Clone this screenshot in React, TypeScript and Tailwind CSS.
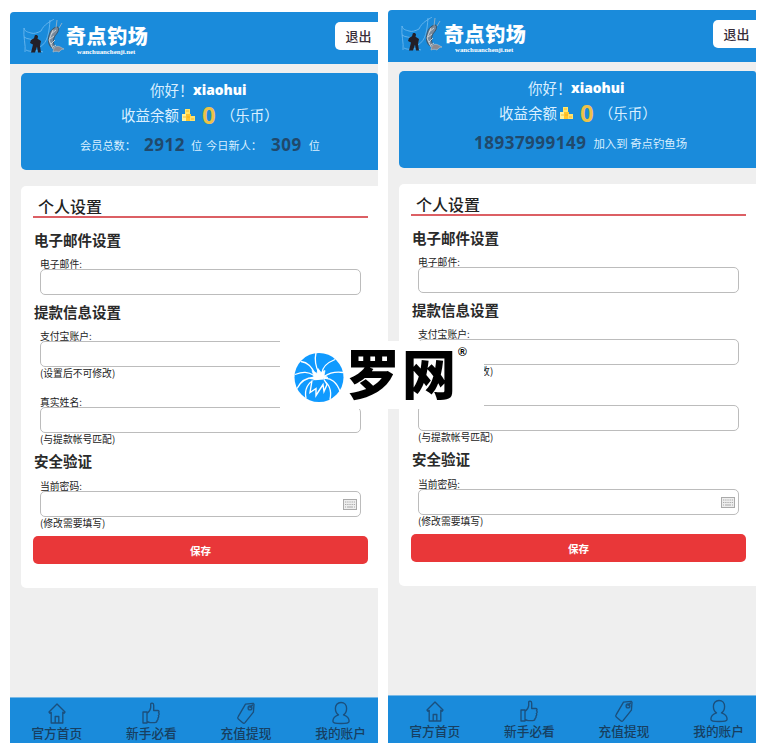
import type { ReactNode } from "react";

type IconName = "home" | "thumb" | "tag" | "user";

function NavIcon({ name }: { name: IconName }) {
  return (
    <svg viewBox="0 0 20 24" className="h-6 w-5" fill="none" stroke="#1b4f7c" strokeWidth="1.35" strokeLinejoin="round" strokeLinecap="round">
      {name === "home" && (
        <path d="M2 11 10 3l8 8-1 1.300-1.200-1V22H4.200V11.300L3 12.300zM8.200 22v-6.500h3.600V22" />
      )}
      {name === "thumb" && (
        <path d="M2 11h4v11H2zM6 12.500c2-1.500 3.500-3.500 3.700-6V3.200c0-1.600 3-1.600 3 1v5.300h4c1.500 0 1.700 1.700.8 2.300 1.100.8.7 2.200-.2 2.700.8.800.4 2.200-.4 2.600.5 1.100-.2 2-.8 2.200 0 1.500-.8 2.300-2.300 2.300H9L6 20.500" />
      )}
      {name === "tag" && (
        <>
          <path d="M9.500 3.200 17 2.300l1 .9-.6 8L9 21.600c-.7.800-1.500.8-2.300.1l-4.400-3.800c-.8-.7-.8-1.500-.1-2.300z" />
          <circle cx="14" cy="6.900" r="1.900" />
          <path d="M14 6.500 16.500 4" />
        </>
      )}
      {name === "user" && (
        <path d="M10 1.500c-3.600 0-5.600 2.700-5.600 6 0 2.700 1.300 5.200 3.100 6.400-3.700 1.300-5.600 4.200-5.600 6.300 0 2 2.200 2.300 8.100 2.300s8.100-.3 8.100-2.300c0-2.100-1.900-5-5.600-6.300 1.800-1.200 3.100-3.700 3.100-6.400 0-3.300-2-6-5.600-6z" />
      )}
    </svg>
  );
}

function FishingLogo() {
  return (
    <svg viewBox="0 0 43 36" className="h-9 w-[43px]" fill="none">
      <path d="M1 9c1 4 4 4 7 5s6 0 10-2M1 9c-1 9 2 17 1 24M1 18c4 3 7 1 11 4M18 12C21 5 27 3 31 0M17 28c8-5 9-14 10-27M3 31c5 3 10-1 17 2" stroke="#75bdf0" strokeWidth=".8" />
      <path d="M11.500 17.500c0-2 3.500-2 3.500.3l-.5 2 3.500 2.200-1 5 1 6.500h-3l-1-6-2 6H8l2-8-3-1.500 1-3 3-1.800z" fill="#231f27" />
      <path d="M35 8c-6 0-9 6-9.500 12s3 11 9 11c-3-3-5-7-3.500-12 1-3.500 6-6 4-11z" fill="#78899b" stroke="#354656" strokeWidth=".8" />
      <path d="m30 11-4 10 4 9M33 11l-5 4m3 2-4 3m5 1-4 4m5 1-3 2" stroke="#d0d8dd" strokeWidth=".9" />
      <path d="M31 29c4-4 7 0 10 1-3 0-4 2-5 3-2-1-4-1-6 0zM34 1l-1 8M39 4l-3 5" stroke="#a5b7c5" strokeWidth=".8" fill="#8b8990" />
    </svg>
  );
}

function Coins() {
  return (
    <svg viewBox="0 0 14 14" className="ml-[2px] h-3.5 w-3.5">
      <path d="M4 1h5v5H4z" fill="#ffe76b" />
      <path d="M1 6h5v7H1z" fill="#fff39a" />
      <path d="M5 6h5v7H5z" fill="#ffc62b" />
      <path d="M9 8h5v5H9z" fill="#ffe16b" />
      <path d="M5 3h3M2 9h3m1 0h3m1 2h3" stroke="#eea614" strokeWidth=".7" />
    </svg>
  );
}

function Keyboard() {
  return (
    <svg viewBox="0 0 14 11" className="h-[11px] w-3.5">
      <rect x=".5" y=".5" width="13" height="10" fill="#eee" stroke="#aaa" />
      <path d="M2 3h10M2 5.500h10" stroke="#aaa" strokeDasharray="1.300 .9" />
      <path d="M2 8h1m1 0h6m1 0h1" stroke="#aaa" />
    </svg>
  );
}

function Heading({ children }: { children: ReactNode }) {
  return <h2 className="h-5 pl-[13px] text-[14.5px] leading-[19px] font-bold text-[#2a2a2a]">{children}</h2>;
}

function Field({ label, note, keyboard }: { label: string; note?: string; keyboard?: boolean }) {
  return (
    <div className="mx-[19px] w-[321px] text-[9.8px] leading-3 text-[#222]">
      <label className="block h-[11px]">{label}</label>
      <div className="flex h-[26px] items-center justify-end rounded-[5px] border border-[#bcbcbc] bg-white pr-[3px]">
        {keyboard && <Keyboard />}
      </div>
      {note && <p className="h-3">{note}</p>}
    </div>
  );
}

const items: { icon: IconName; label: string }[] = [
  { icon: "home", label: "官方首页" },
  { icon: "thumb", label: "新手必看" },
  { icon: "tag", label: "充值提现" },
  { icon: "user", label: "我的账户" },
];

function Phone({ stats }: { stats: ReactNode }) {
  return (
    <section className="flex w-[368px] shrink-0 flex-col overflow-hidden rounded-tl-[4px] bg-[#efefef]">
      <header className="flex h-[52px] shrink-0 items-start justify-between bg-[#1a8bdb]">
        <div className="flex pt-[7px] pl-[13px]">
          <FishingLogo />
          <div className="pt-[5px] text-white">
            <div className="h-[25px] text-[20px] leading-6 font-black tracking-[0.6px] whitespace-nowrap">奇点钓场</div>
            <div className="pl-[11px] font-['Liberation_Serif',serif] text-[6.8px] leading-[6px] font-bold">wanchuanchenji.net</div>
          </div>
        </div>
        <button className="mt-2.5 h-7 w-[43px] rounded-l-[5px] bg-white pl-1 text-[13px] font-medium text-[#372d38]">退出</button>
      </header>
      <div className="mt-[9px] ml-[11px] h-[97px] shrink-0 rounded-l-[5px] rounded-tr-[3px] bg-[#1a8bdb] pt-[5px] whitespace-nowrap text-[#d9efff]">
        <div className="flex h-6 items-center pl-[129px] text-[14.5px]">
          <span className="w-[43px]">你好！</span>
          <b className="font-['Open_Sans',sans-serif] text-[13.800px] font-extrabold text-white">xiaohui</b>
        </div>
        <div className="flex h-[26px] items-center pl-[100px] text-[14.5px]">
          <span>收益余额</span>
          <Coins />
          <b className="ml-[7px] font-['Open_Sans',sans-serif] text-[24px] leading-6 font-bold text-[#ecc24a]">0</b>
          <span className="ml-[5px] text-[14.5px]">（乐币）</span>
        </div>
        <div className="flex h-[33px] items-center text-[11.200px]">{stats}</div>
      </div>
      <main className="mt-4 ml-[11px] h-[402px] shrink-0 rounded-l-[5px] bg-white">
        <h1 className="mr-[10px] ml-3 h-[32px] border-b-2 border-[#dc5f64] pt-2.5 pl-[5px] text-[16px] leading-5 font-medium text-[#222]">个人设置</h1>
        <div className="h-3" />
        <Heading>电子邮件设置</Heading>
        <div className="h-2" />
        <Field label="电子邮件:" />
        <div className="h-[7px]" />
        <Heading>提款信息设置</Heading>
        <div className="h-2" />
        <Field label="支付宝账户:" note="(设置后不可修改)" />
        <div className="h-[17px]" />
        <Field label="真实姓名:" note="(与提款帐号匹配)" />
        <div className="h-[6px]" />
        <Heading>安全验证</Heading>
        <div className="h-[9px]" />
        <Field label="当前密码:" note="(修改需要填写)" keyboard />
        <button className="mt-[7px] ml-3 block h-7 w-[335px] rounded-[5px] bg-[#e93739] pt-0.5 text-[10.5px] font-bold text-white">保存</button>
      </main>
      <nav className="mt-[109px] flex min-h-0 flex-1 border-t border-[#79b9e6] bg-[#1a8bdb]">
        {items.map(({ icon, label }) => (
          <div key={icon} className="flex w-[94.6px] shrink-0 flex-col items-center pt-[3px] pr-px">
            <NavIcon name={icon} />
            <span className="text-[12.7px] leading-4 font-medium whitespace-nowrap text-[#173f61]">{label}</span>
          </div>
        ))}
      </nav>
    </section>
  );
}

function Watermark() {
  return (
    <div className="absolute top-[341px] left-[280px] flex h-[68px] w-[204px] items-start bg-white text-black">
      <svg viewBox="0 0 50 50" className="mt-[11px] ml-3.5 h-[51px] w-[50px] shrink-0" fill="none">
        <circle cx="25" cy="25" r="24.500" fill="#109aff" />
        <path d="M25 21C22 15 20 9 22 0M28 21C28 16 31 11 41 7M30 24c6-4 12-5 19-4M30 26c7-1 13 4 16 13M28 27c7 4 10 11 8 20M21 21C17 14 14 10 7 9M20 23C14 19 9 19 1 22M20 25C12 25 6 30 3 36M21 27C14 30 10 37 12 46" stroke="white" strokeWidth="1.300" />
        <path d="m18 18 5 3 1-5 3 4 4-2-1 5 4 2-5 1 2 4-5-2-4 3-1-4-5-1 4-2z" fill="white" stroke="white" strokeWidth=".8" />
        <path d="m18 28-2 12 6-4 0 7 7-11 1 7 3-7-3-5" fill="#109aff" stroke="white" strokeWidth="1.400" />
      </svg>
      <span className="ml-[2px] text-[54px] leading-[62px] font-black tracking-[2px] whitespace-nowrap">罗网</span>
      <span className="pt-[1px] font-['Liberation_Sans',sans-serif] text-[12px] leading-5 font-bold">®</span>
    </div>
  );
}

export default function App() {
  const number = "font-['Open_Sans',sans-serif] text-[17px] font-bold tracking-[0.5px] text-[#20496c]";
  return (
    <div className="relative flex h-[751px] w-[764px] gap-2.5 overflow-hidden bg-white pb-2 pl-2.5 font-['Noto_Sans_CJK_SC',sans-serif]">
      <div className="flex pt-3">
        <Phone
          stats={
            <>
              <span className="ml-[59px] w-[64px] pt-0.5">会员总数：</span>
              <b className={number}>2912</b>
              <span className="ml-1.5 pt-0.5">位</span>
              <span className="ml-[4px] w-[65px] pt-0.5">今日新人：</span>
              <b className={number}>309</b>
              <span className="ml-[7px] pt-0.5">位</span>
            </>
          }
        />
      </div>
      <div className="flex pt-2.5">
        <Phone
          stats={
            <>
              <b className={`ml-[75px] ${number}`}>18937999149</b>
              <span className="ml-[7px] pt-0.5 text-[11.400px]">加入到 奇点钓鱼场</span>
            </>
          }
        />
      </div>
      <Watermark />
    </div>
  );
}
